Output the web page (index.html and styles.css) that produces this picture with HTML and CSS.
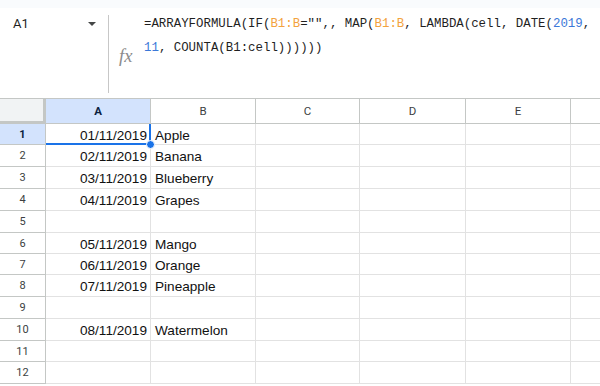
FILE: index.html
```html
<!DOCTYPE html>
<html>
<head>
<meta charset="utf-8">
<link rel="stylesheet" href="styles.css">
</head>
<body>
<div class="top-strip"></div>
<div class="formula-bar">
  <div class="name-box">
    <span class="name">A1</span>
    <span class="caret"></span>
  </div>
  <div class="divider"></div>
  <div class="fx">fx</div>
  <div class="formula">
    <div class="fline">=ARRAYFORMULA(IF(<span class="rng">B1:B</span>="",, MAP(<span class="rng">B1:B</span>, LAMBDA(cell, DATE(<span class="num">2019</span>,</div>
    <div class="fline"><span class="num">11</span>, COUNTA(B1:cell))))))</div>
  </div>
</div>
<div class="sheet">
  <div class="corner"></div>
  <div class="ch sel-h">A</div>
  <div class="ch">B</div>
  <div class="ch">C</div>
  <div class="ch">D</div>
  <div class="ch">E</div>
  <div class="ch last"></div>

  <div class="rh sel-h">1</div>
  <div class="c num-cell active">01/11/2019<span class="sel-box"></span><span class="handle"></span></div>
  <div class="c">Apple</div><div class="c"></div><div class="c"></div><div class="c"></div><div class="c last"></div>

  <div class="rh">2</div>
  <div class="c num-cell">02/11/2019</div>
  <div class="c">Banana</div><div class="c"></div><div class="c"></div><div class="c"></div><div class="c last"></div>

  <div class="rh">3</div>
  <div class="c num-cell">03/11/2019</div>
  <div class="c">Blueberry</div><div class="c"></div><div class="c"></div><div class="c"></div><div class="c last"></div>

  <div class="rh">4</div>
  <div class="c num-cell">04/11/2019</div>
  <div class="c">Grapes</div><div class="c"></div><div class="c"></div><div class="c"></div><div class="c last"></div>

  <div class="rh">5</div>
  <div class="c num-cell"></div>
  <div class="c"></div><div class="c"></div><div class="c"></div><div class="c"></div><div class="c last"></div>

  <div class="rh">6</div>
  <div class="c num-cell">05/11/2019</div>
  <div class="c">Mango</div><div class="c"></div><div class="c"></div><div class="c"></div><div class="c last"></div>

  <div class="rh">7</div>
  <div class="c num-cell">06/11/2019</div>
  <div class="c">Orange</div><div class="c"></div><div class="c"></div><div class="c"></div><div class="c last"></div>

  <div class="rh">8</div>
  <div class="c num-cell">07/11/2019</div>
  <div class="c">Pineapple</div><div class="c"></div><div class="c"></div><div class="c"></div><div class="c last"></div>

  <div class="rh">9</div>
  <div class="c num-cell"></div>
  <div class="c"></div><div class="c"></div><div class="c"></div><div class="c"></div><div class="c last"></div>

  <div class="rh">10</div>
  <div class="c num-cell">08/11/2019</div>
  <div class="c">Watermelon</div><div class="c"></div><div class="c"></div><div class="c"></div><div class="c last"></div>

  <div class="rh">11</div>
  <div class="c num-cell"></div>
  <div class="c"></div><div class="c"></div><div class="c"></div><div class="c"></div><div class="c last"></div>

  <div class="rh">12</div>
  <div class="c num-cell"></div>
  <div class="c"></div><div class="c"></div><div class="c"></div><div class="c"></div><div class="c last"></div>
</div>
</body>
</html>
```

FILE: styles.css
```css
* { box-sizing: border-box; }
html, body {
  margin: 0;
  padding: 0;
  width: 600px;
  height: 386px;
  overflow: hidden;
  background: #fff;
  font-family: "Liberation Sans", Arial, sans-serif;
  color: #1f1f1f;
}
.top-strip {
  height: 8px;
  background: #f9fbfd;
}
.formula-bar {
  height: 91px;
  display: flex;
  border-bottom: 1px solid #c4c7c5;
}
.name-box {
  width: 108px;
  display: flex;
  justify-content: space-between;
  align-items: flex-start;
  padding: 3.5px 12px 0 13px;
}
.name {
  font-family: Roboto, "Liberation Sans", sans-serif;
  font-size: 13px;
  line-height: 24px;
  color: #1f1f1f;
}
.caret {
  margin-top: 10px;
  width: 0;
  height: 0;
  border-left: 4px solid transparent;
  border-right: 4px solid transparent;
  border-top: 4px solid #444746;
}
.divider {
  width: 1px;
  background: #c7c7c7;
  margin: 7px 0 5px;
}
.fx {
  width: 35px;
  padding: 38px 0 0 10px;
  font-family: "Liberation Serif", serif;
  font-style: italic;
  font-size: 18.5px;
  line-height: 20px;
  color: #8c8c8c;
}
.formula {
  padding-top: 3.5px;
  font-family: "Liberation Mono", monospace;
  font-size: 12.4px;
  color: #1f1f1f;
}
.fline {
  line-height: 24px;
  white-space: pre;
}
.rng { color: #f3a23d; }
.num { color: #3b78d8; }

.sheet {
  display: grid;
  grid-template-columns: 46px 105px 105px 104px 106px 105px 1fr;
  grid-template-rows: 25px 21px 22px 22px 22px 22px 21px 21px 22px 22px 22px 21px 22px;
}
.corner {
  background: #f1f3f4;
  border-right: 3px solid #c4c7c5;
  border-bottom: 3px solid #c4c7c5;
}
.ch {
  background: #fff;
  border-right: 1px solid #c4c7c5;
  border-bottom: 1px solid #c4c7c5;
  display: flex;
  align-items: center;
  justify-content: center;
  font-family: Roboto, "Liberation Sans", sans-serif;
  font-size: 11.5px;
  color: #3c3f42;
}
.rh {
  background: #fff;
  border-right: 1px solid #c4c7c5;
  border-bottom: 1px solid #c4c7c5;
  display: flex;
  align-items: center;
  justify-content: center;
  font-family: Roboto, "Liberation Sans", sans-serif;
  font-size: 11px;
  color: #3c3f42;
}
.sel-h {
  background: #d3e3fd;
  color: #0b1f3f;
  font-weight: bold;
}
.c {
  border-right: 1px solid #e2e2e2;
  border-bottom: 1px solid #e2e2e2;
  display: flex;
  align-items: center;
  padding: 2px 3px 0 4px;
  font-size: 13.6px;
  white-space: nowrap;
  overflow: visible;
  color: #111;
}
.num-cell {
  justify-content: flex-end;
}
.c.last, .ch.last { border-right: none; }
.active {
  position: relative;
}
.sel-box {
  position: absolute;
  left: 0;
  top: 0;
  right: -1px;
  bottom: -1px;
  border-right: 2px solid #1a73e8;
  border-bottom: 2px solid #1a73e8;
  pointer-events: none;
}
.handle {
  position: absolute;
  right: -5px;
  bottom: -5px;
  width: 9px;
  height: 9px;
  border-radius: 50%;
  background: #1a73e8;
  border: 1px solid #fff;
  z-index: 2;
}
```
